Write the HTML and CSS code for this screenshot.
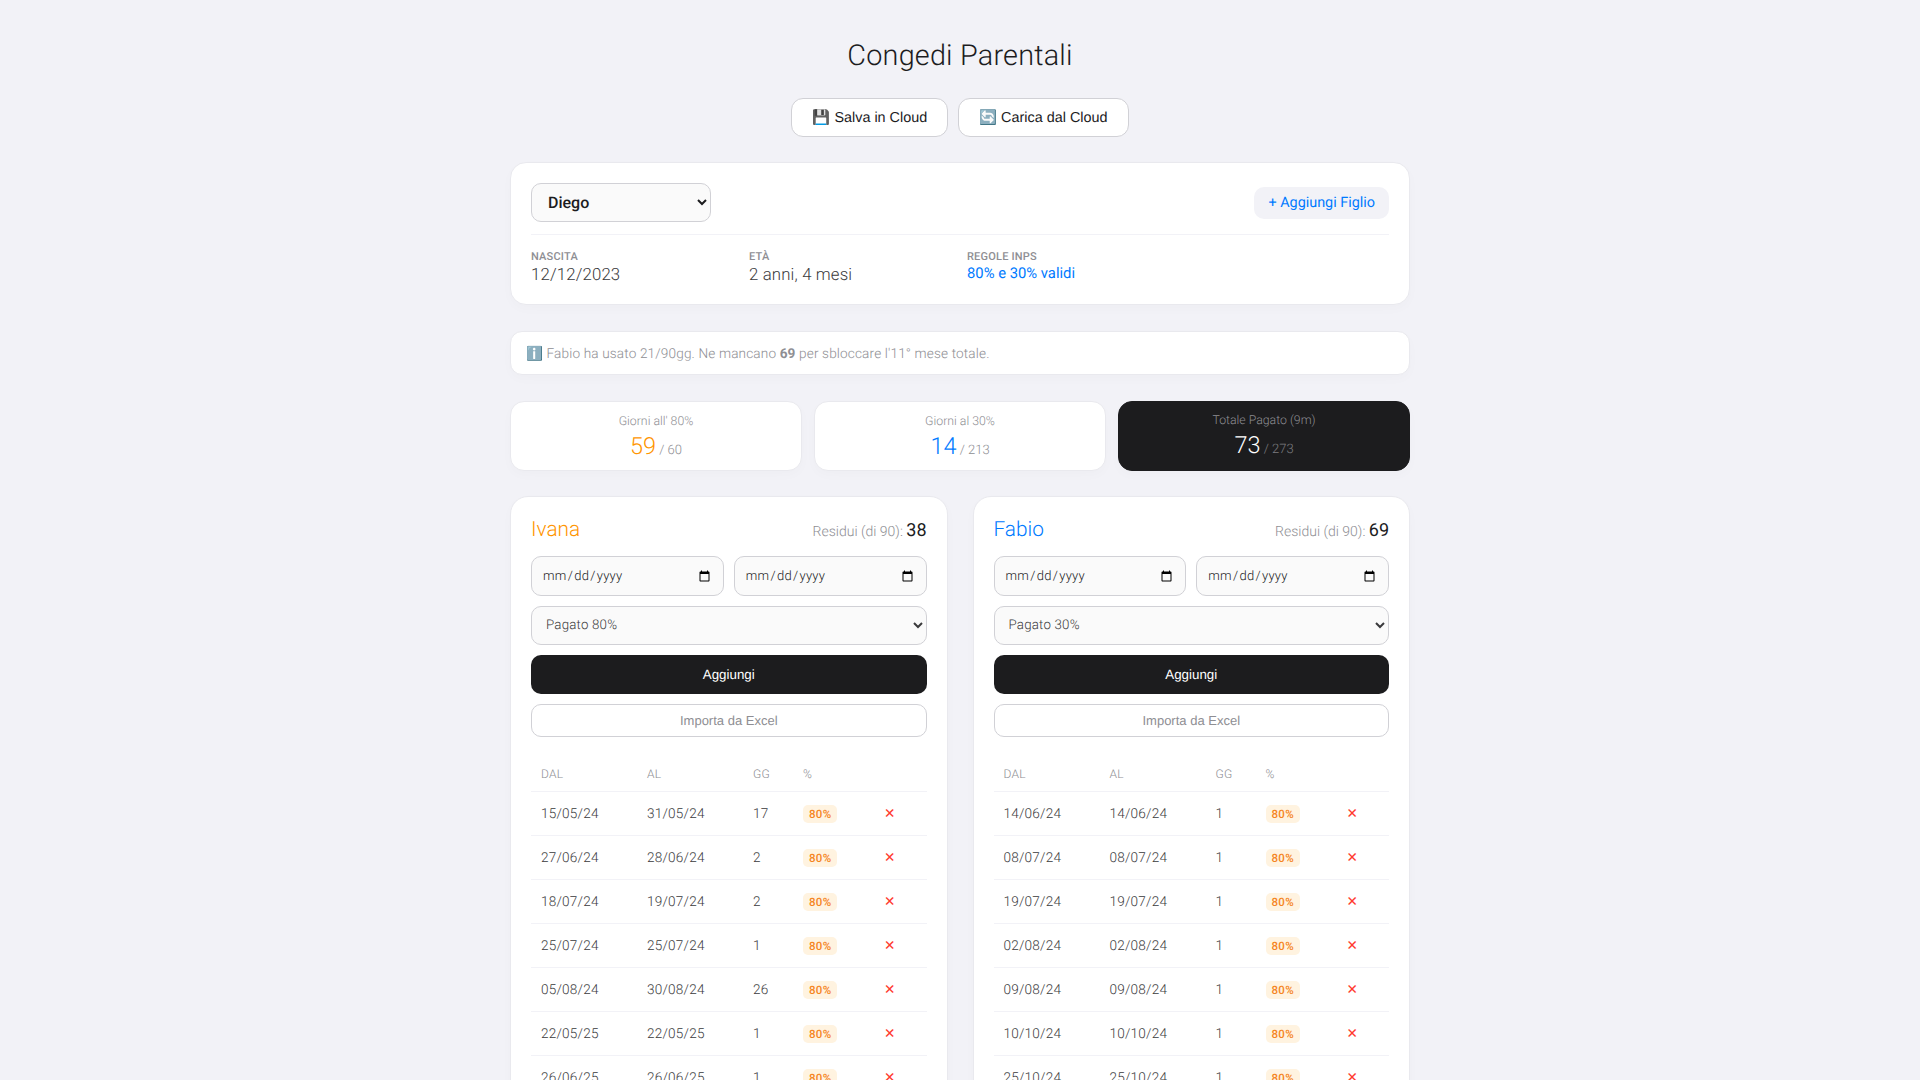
FILE: index.html
```html
<!DOCTYPE html>
<html lang="it">
<head>
<meta charset="utf-8">
<title>Congedi Parentali</title>
<link rel="stylesheet" href="styles.css">
</head>
<body>
<main class="page">
  <h1 class="title">Congedi Parentali</h1>
  <div class="cloud">
    <button class="cloud-btn">💾 Salva in Cloud</button>
    <button class="cloud-btn">🔄 Carica dal Cloud</button>
  </div>

  <section class="card child">
    <div class="child-top">
      <select class="child-select"><option>Diego</option></select>
      <button class="add-child">+ Aggiungi Figlio</button>
    </div>
    <div class="info">
      <div><div class="info-label">NASCITA</div><div class="info-value">12/12/2023</div></div>
      <div><div class="info-label">ETÀ</div><div class="info-value">2 anni, 4 mesi</div></div>
      <div><div class="info-label">REGOLE INPS</div><div class="info-rule">80% e 30% validi</div></div>
    </div>
  </section>

  <div class="card alert">ℹ️ Fabio ha usato 21/90gg. Ne mancano <b>69</b> per sbloccare l'11° mese totale.</div>

  <section class="stats">
    <div class="card stat"><div class="stat-label">Giorni all' 80%</div><div class="stat-line"><span class="stat-num orange">59</span><span class="stat-of"> / 60</span></div></div>
    <div class="card stat"><div class="stat-label">Giorni al 30%</div><div class="stat-line"><span class="stat-num blue">14</span><span class="stat-of"> / 213</span></div></div>
    <div class="card stat dark"><div class="stat-label">Totale Pagato (9m)</div><div class="stat-line"><span class="stat-num">73</span><span class="stat-of"> / 273</span></div></div>
  </section>

  <section class="parents">
    <article class="card parent">
      <header class="parent-head"><span class="parent-name orange">Ivana</span><span class="residui">Residui (di 90): <b>38</b></span></header>
      <div class="dates"><input class="field" type="date"><input class="field" type="date"></div>
      <select class="field type"><option>Pagato 80%</option></select>
      <button class="add">Aggiungi</button>
      <button class="import">Importa da Excel</button>
      <table class="leave">
        <thead><tr><th class="c-date">DAL</th><th class="c-date">AL</th><th class="c-gg">GG</th><th class="c-pct">%</th><th></th></tr></thead>
        <tbody>
          <tr><td>15/05/24</td><td>31/05/24</td><td>17</td><td><span class="badge">80%</span></td><td class="del">✕</td></tr>
          <tr><td>27/06/24</td><td>28/06/24</td><td>2</td><td><span class="badge">80%</span></td><td class="del">✕</td></tr>
          <tr><td>18/07/24</td><td>19/07/24</td><td>2</td><td><span class="badge">80%</span></td><td class="del">✕</td></tr>
          <tr><td>25/07/24</td><td>25/07/24</td><td>1</td><td><span class="badge">80%</span></td><td class="del">✕</td></tr>
          <tr><td>05/08/24</td><td>30/08/24</td><td>26</td><td><span class="badge">80%</span></td><td class="del">✕</td></tr>
          <tr><td>22/05/25</td><td>22/05/25</td><td>1</td><td><span class="badge">80%</span></td><td class="del">✕</td></tr>
          <tr><td>26/06/25</td><td>26/06/25</td><td>1</td><td><span class="badge">80%</span></td><td class="del">✕</td></tr>
        </tbody>
      </table>
    </article>
    <article class="card parent">
      <header class="parent-head"><span class="parent-name blue">Fabio</span><span class="residui">Residui (di 90): <b>69</b></span></header>
      <div class="dates"><input class="field" type="date"><input class="field" type="date"></div>
      <select class="field type"><option>Pagato 30%</option></select>
      <button class="add">Aggiungi</button>
      <button class="import">Importa da Excel</button>
      <table class="leave">
        <thead><tr><th class="c-date">DAL</th><th class="c-date">AL</th><th class="c-gg">GG</th><th class="c-pct">%</th><th></th></tr></thead>
        <tbody>
          <tr><td>14/06/24</td><td>14/06/24</td><td>1</td><td><span class="badge">80%</span></td><td class="del">✕</td></tr>
          <tr><td>08/07/24</td><td>08/07/24</td><td>1</td><td><span class="badge">80%</span></td><td class="del">✕</td></tr>
          <tr><td>19/07/24</td><td>19/07/24</td><td>1</td><td><span class="badge">80%</span></td><td class="del">✕</td></tr>
          <tr><td>02/08/24</td><td>02/08/24</td><td>1</td><td><span class="badge">80%</span></td><td class="del">✕</td></tr>
          <tr><td>09/08/24</td><td>09/08/24</td><td>1</td><td><span class="badge">80%</span></td><td class="del">✕</td></tr>
          <tr><td>10/10/24</td><td>10/10/24</td><td>1</td><td><span class="badge">80%</span></td><td class="del">✕</td></tr>
          <tr><td>25/10/24</td><td>25/10/24</td><td>1</td><td><span class="badge">80%</span></td><td class="del">✕</td></tr>
        </tbody>
      </table>
    </article>
  </section>
</main>
</body>
</html>
```

FILE: styles.css
```css
* { box-sizing: border-box; text-rendering: geometricPrecision; }
html, body { height: 100%; overflow: hidden; }
body {
  margin: 0;
  background: #f2f2f7;
  color: #1c1c1e;
  font-family: Roboto, "Noto Sans", sans-serif;
  font-weight: 300;
}
.page { width: 900px; margin: 0 auto; padding-top: 36px; }
.title {
  margin: 0;
  height: 40px;
  line-height: 41px;
  font-size: 28.8px;
  font-weight: 300;
  letter-spacing: 0.2px;
  text-align: center;
}
.cloud { display: flex; justify-content: center; gap: 10px; margin-top: 22px; }
.cloud-btn {
  height: 39px;
  padding: 0 20px;
  background: #fff;
  border: 1px solid #d1d1d6;
  border-radius: 12px;
  color: #1c1c1e;
  font: 400 14.4px "Liberation Sans", Arial, sans-serif;
}
.card {
  background: #fff;
  border: 1px solid #e9e9ee;
  border-radius: 16px;
  box-shadow: 0 4px 12px rgba(0, 0, 0, 0.02);
}
.child { margin-top: 25px; height: 143px; padding: 20px; }
.child-top {
  display: flex;
  justify-content: space-between;
  align-items: center;
  padding-bottom: 12px;
  border-bottom: 1px solid #f2f2f7;
}
.child-select {
  width: 180px;
  height: 39px;
  padding: 0 12px;
  background: #fafafa;
  border: 1px solid #d1d1d6;
  border-radius: 10px;
  color: #1c1c1e;
  font: 500 16px Roboto, sans-serif;
}
.add-child {
  height: 32px;
  padding: 0 14px;
  background: #f2f2f7;
  border: 0;
  border-radius: 10px;
  color: #007aff;
  font: 400 14.4px Roboto, sans-serif;
}
.info { display: grid; grid-template-columns: repeat(4, 1fr); gap: 14px; margin-top: 16px; }
.info-label { font-size: 11px; font-weight: 500; line-height: 12px; color: #8e8e93; letter-spacing: 0.2px; }
.info-value { margin-top: 2px; font-size: 16.8px; line-height: 21px; color: #3a3a3c; letter-spacing: 0.15px; }
.info-rule { margin-top: 1px; font-size: 14.8px; font-weight: 400; line-height: 18px; color: #007aff; }
.alert {
  margin-top: 26px;
  height: 44px;
  padding: 0 15px;
  border-radius: 12px;
  font-size: 13.6px;
  font-weight: 300;
  line-height: 44px;
  letter-spacing: 0.15px;
  color: #8e8e93;
}
.alert b { font-weight: 700; color: #8e8e93; }
.stats { display: grid; grid-template-columns: repeat(3, 1fr); gap: 12px; margin-top: 26px; }
.stat { height: 70px; padding-top: 13px; border-radius: 14px; text-align: center; }
.stat-label { font-size: 12.3px; line-height: 14px; color: #8e8e93; }
.stat-line { margin-top: 3px; line-height: 28px; }
.stat-num { font-size: 23.5px; font-weight: 300; }
.stat-of { font-size: 13px; font-weight: 300; color: #8e8e93; }
.dark { padding-top: 12px; background: #1c1c1e; border-color: #1c1c1e; color: #fff; }
.dark .stat-of { color: #7c7c80; }
.orange { color: #ff9500; }
.blue { color: #007aff; }
.parents { display: grid; grid-template-columns: repeat(2, 1fr); gap: 25px; margin-top: 25px; }
.parent { padding: 20px; border-radius: 18px; }
.parent-head { display: flex; justify-content: space-between; align-items: baseline; height: 31px; line-height: 26px; }
.parent-name { font-size: 20.8px; font-weight: 300; }
.residui { font-size: 14px; color: #8e8e93; }
.residui b { font-size: 18px; font-weight: 400; color: #1c1c1e; }
.dates { display: grid; grid-template-columns: 1fr 1fr; gap: 10px; margin-top: 8px; }
.field {
  height: 40px;
  width: 100%;
  padding: 0 10px;
  background: #fafafa;
  border: 1px solid #d1d1d6;
  border-radius: 10px;
  color: #1c1c1e;
  font: 300 13px Roboto, sans-serif;
  letter-spacing: 0.3px;
}
.type { display: block; height: 39px; margin-top: 10px; padding: 0 10px; font-size: 13.3px; letter-spacing: 0.2px; color: #3a3a3c; }
.add {
  display: block;
  width: 100%;
  height: 39px;
  margin-top: 10px;
  background: #1c1c1e;
  border: 0;
  border-radius: 10px;
  color: #fff;
  font: 400 13.33px "Liberation Sans", Arial, sans-serif;
}
.import {
  display: block;
  width: 100%;
  height: 33px;
  margin-top: 10px;
  background: #fff;
  border: 1px solid #d1d1d6;
  border-radius: 10px;
  color: #8e8e93;
  font: 400 13px "Liberation Sans", Arial, sans-serif;
}
.leave { width: 100%; margin-top: 16px; border-collapse: collapse; table-layout: fixed; font-size: 13.6px; font-weight: 300; letter-spacing: 0.2px; color: #3a3a3c; }
.leave th {
  height: 38px;
  padding: 5px 10px 0;
  border-bottom: 1px solid #f2f2f7;
  font-size: 12px;
  font-weight: 300;
  color: #8e8e93;
  text-align: left;
}
.c-date { width: 106px; }
.c-gg { width: 50px; }
.c-pct { width: 81px; }
.leave td { height: 44px; padding: 2px 10px 0; border-bottom: 1px solid #f2f2f7; line-height: 18px; }
.badge {
  display: inline-block;
  padding: 0 6px;
  line-height: 18px;
  background: #fff3e0;
  border-radius: 5px;
  color: #f5851f;
  font-size: 11.5px;
  font-weight: 500;
  letter-spacing: 0.3px;
}
.del { color: #ff3b30; font-size: 13.6px; }
```
